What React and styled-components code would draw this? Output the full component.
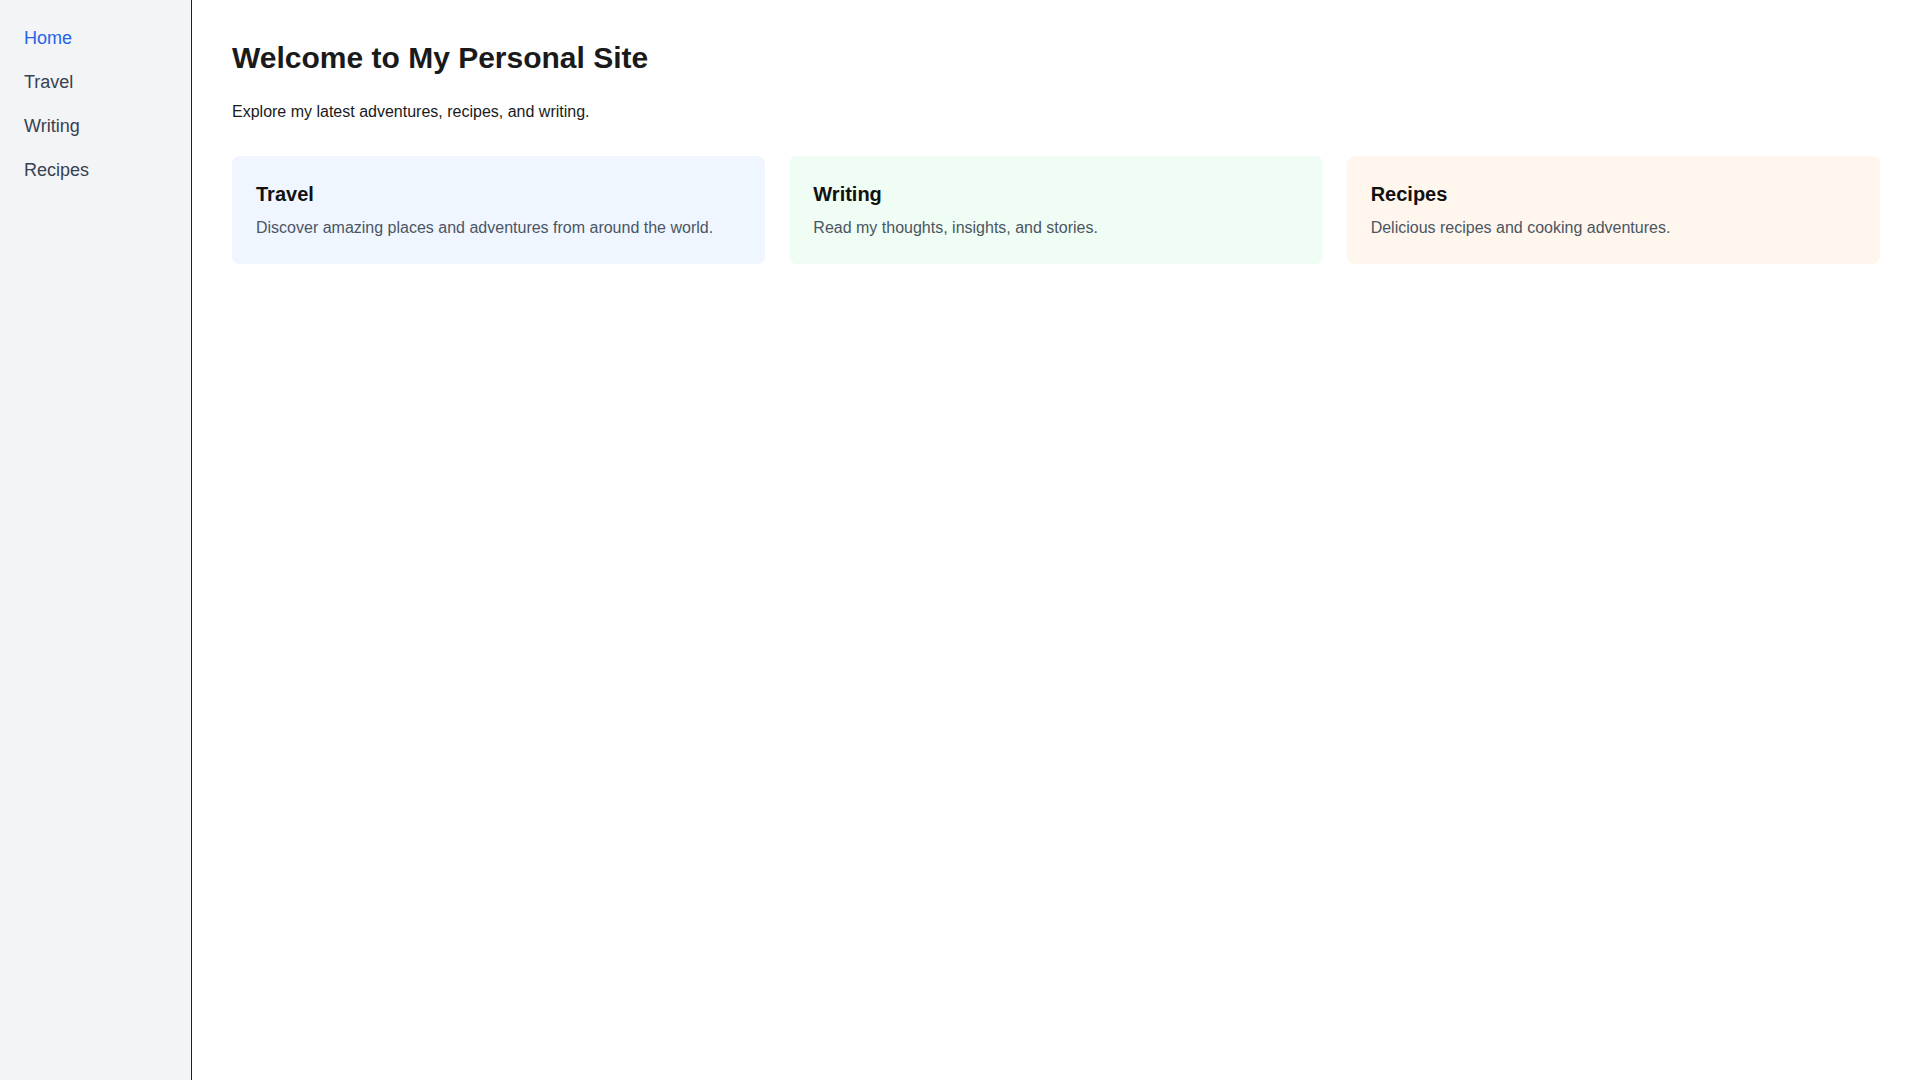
import React from "react";
import styled, { createGlobalStyle } from "styled-components";

const GlobalStyle = createGlobalStyle`
  * { box-sizing: border-box; }
  html, body { margin: 0; padding: 0; }
  body {
    font-family: "Liberation Sans", Arial, Helvetica, sans-serif;
    background: #ffffff;
    color: #111827;
  }
`;

const Layout = styled.div`
  display: flex;
  min-height: 100vh;
`;

const Sidebar = styled.nav`
  width: 192px;
  flex-shrink: 0;
  background: #f3f4f6;
  border-right: 1px solid #1f1f1f;
  padding: 16px;
  display: flex;
  flex-direction: column;
`;

const NavLink = styled.a`
  display: block;
  padding: 8px;
  font-size: 18px;
  line-height: 28px;
  text-decoration: none;
  color: ${(p) => (p.$active ? "#2563eb" : "#374151")};
  cursor: pointer;
`;

const Main = styled.main`
  flex: 1;
  padding: 40px;
`;

const Title = styled.h1`
  margin: 0 0 24px;
  font-size: 30px;
  line-height: 36px;
  font-weight: 700;
  color: #1a1a1a;
`;

const Intro = styled.p`
  margin: 0 0 32px;
  font-size: 16px;
  line-height: 24px;
  color: #1a1a1a;
`;

const CardGrid = styled.div`
  display: grid;
  grid-template-columns: repeat(3, 1fr);
  gap: 24px;
`;

const Card = styled.div`
  background: ${(p) => p.$bg};
  border-radius: 8px;
  padding: 24px;
`;

const CardTitle = styled.h2`
  margin: 0 0 8px;
  font-size: 20px;
  line-height: 28px;
  font-weight: 700;
  color: #111111;
`;

const CardText = styled.p`
  margin: 0;
  font-size: 16px;
  line-height: 24px;
  color: #4b5563;
`;

const navItems = ["Home", "Travel", "Writing", "Recipes"];

const cards = [
  { title: "Travel", text: "Discover amazing places and adventures from around the world.", bg: "#eff6ff" },
  { title: "Writing", text: "Read my thoughts, insights, and stories.", bg: "#f0fdf4" },
  { title: "Recipes", text: "Delicious recipes and cooking adventures.", bg: "#fff7ed" },
];

export default function App() {
  return (
    <>
      <GlobalStyle />
      <Layout>
        <Sidebar>
          {navItems.map((item, i) => (
            <NavLink key={item} $active={i === 0}>
              {item}
            </NavLink>
          ))}
        </Sidebar>
        <Main>
          <Title>Welcome to My Personal Site</Title>
          <Intro>Explore my latest adventures, recipes, and writing.</Intro>
          <CardGrid>
            {cards.map((c) => (
              <Card key={c.title} $bg={c.bg}>
                <CardTitle>{c.title}</CardTitle>
                <CardText>{c.text}</CardText>
              </Card>
            ))}
          </CardGrid>
        </Main>
      </Layout>
    </>
  );
}
